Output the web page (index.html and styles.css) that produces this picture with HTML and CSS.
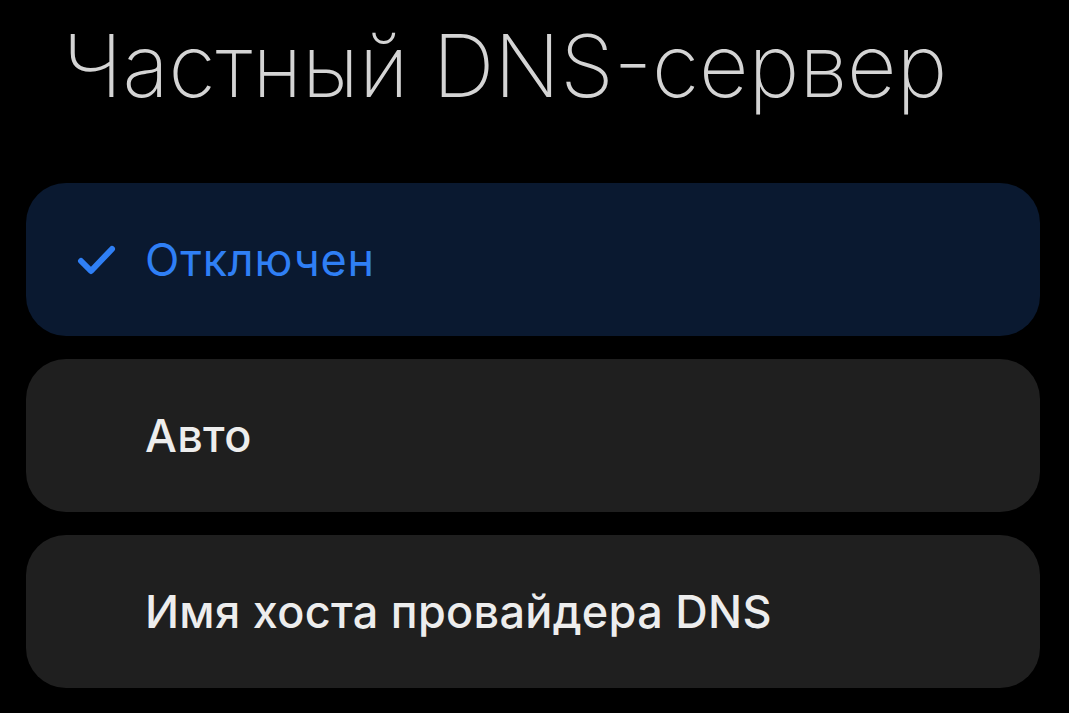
FILE: index.html
```html
<!DOCTYPE html>
<html lang="ru">
<head>
<meta charset="utf-8">
<link rel="stylesheet" href="styles.css">
</head>
<body>
<div class="screen">
  <h1 class="title">Частный DNS-сервер</h1>
  <div class="list">
    <div class="item item--selected">
      <span class="check">
        <svg width="42" height="34" viewBox="0 0 42 34"><path d="M5 18 L15 28 L36 6" fill="none" stroke="#2f7ff5" stroke-width="6" stroke-linecap="round" stroke-linejoin="round"/></svg>
      </span>
      <span class="label">Отключен</span>
    </div>
    <div class="item">
      <span class="check"></span>
      <span class="label">Авто</span>
    </div>
    <div class="item">
      <span class="check"></span>
      <span class="label">Имя хоста провайдера DNS</span>
    </div>
  </div>
</div>
</body>
</html>
```
FILE: styles.css
```css
html, body {
  margin: 0;
  padding: 0;
  background: #000;
}
.screen {
  width: 1069px;
  height: 713px;
  overflow: hidden;
  font-family: Inter, "Noto Sans", sans-serif;
}
.title {
  margin: 0;
  padding: 13px 0 0 63px;
  height: 165px;
  box-sizing: border-box;
  font-size: 86px;
  font-weight: 200;
  color: #d4d4d4;
  line-height: 106px;
  letter-spacing: 0;
}
.list {
  display: flex;
  flex-direction: column;
  gap: 23px;
  padding: 18px 29px 0 26px;
}
.item {
  height: 153px;
  border-radius: 40px;
  background: #1f1f1f;
  display: flex;
  align-items: center;
  padding-left: 50px;
}
.item--selected {
  background: #0a1930;
}
.check {
  width: 69px;
  display: flex;
  align-items: center;
}
.label {
  font-size: 45px;
  font-weight: 500;
  color: #ededed;
  letter-spacing: 0.3px;
}
.item--selected .label {
  color: #2f7ff5;
  font-weight: 400;
  letter-spacing: 0.8px;
}
```
